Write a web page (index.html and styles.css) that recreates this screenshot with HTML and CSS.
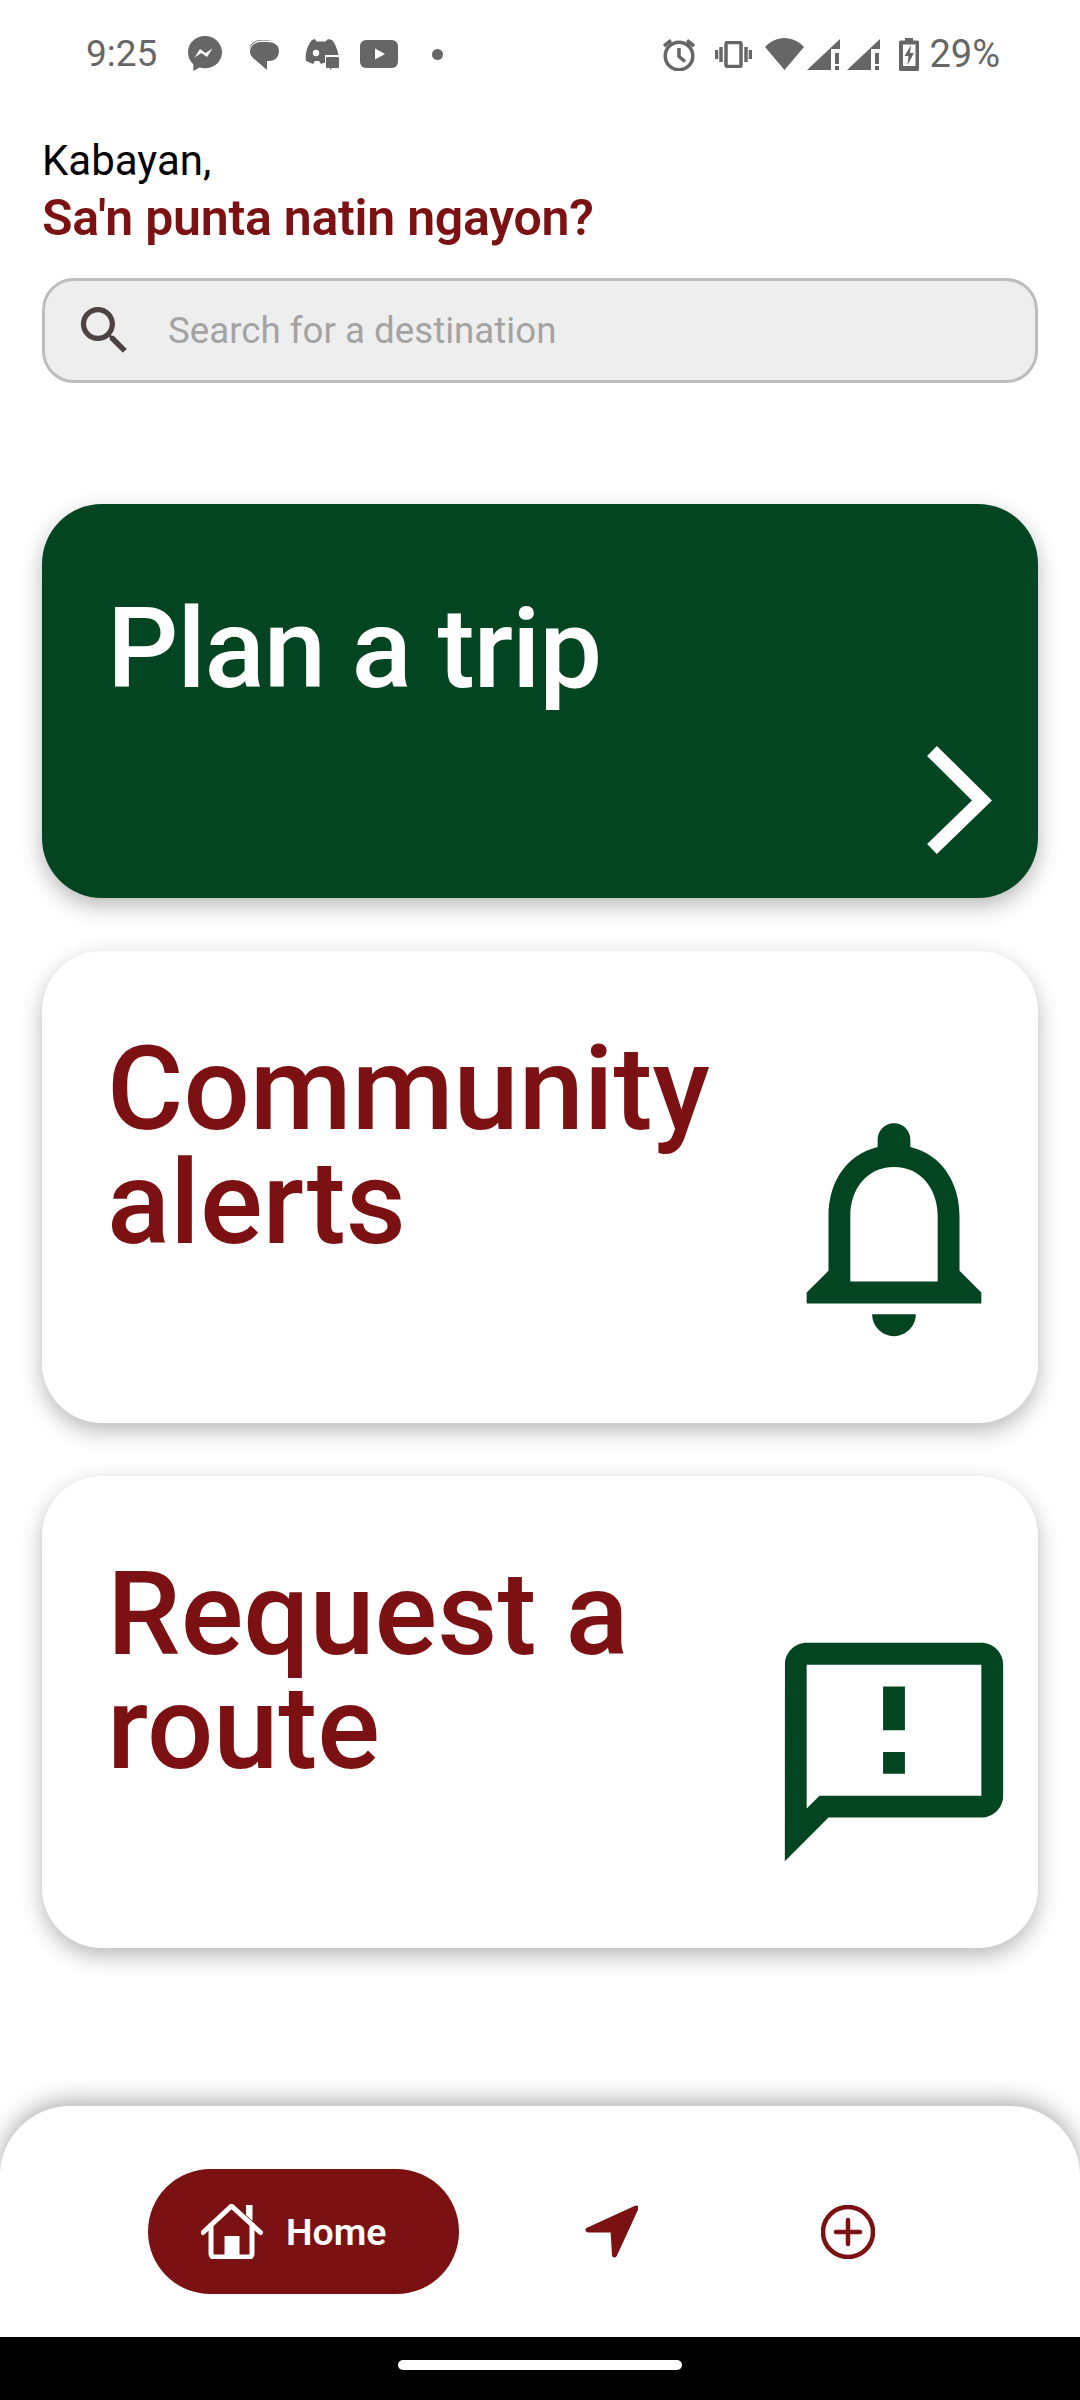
FILE: index.html
```html
<!DOCTYPE html>
<html lang="en">
<head>
<meta charset="utf-8">
<title>Kabayan</title>
<link rel="stylesheet" href="styles.css">
</head>
<body>
<div class="app">
  <header class="status">
    <div class="status-left">
      <span class="time">9:25</span>
      <svg class="si si-msg" viewBox="0 0 34 36"><path class="g" d="M17 0C7.5 0 0 7 0 16.3c0 4.9 2 9.1 5.3 12V35l6.2-3.4c1.7.5 3.6.7 5.5.7 9.5 0 17-7 17-16S26.500 0 17 0z"/><path class="w" d="M6.500 21.500l5.500-8.500 5.500 4 7-4.500-5.500 8.500-5.500-4z"/></svg>
      <svg class="si si-dis" viewBox="0 0 31 31"><path class="g" d="M1 11C2 5 6 1 13 1h6c3 0 4 .5 5 1-1.500-.5-3-.5-5-.5h-6C7 1.500 2.500 6 1 11z"/><path class="g" d="M13 3h6c7 0 12 3 12 9s-4 10-10 10h-2v9L5 19C3 17 2 15 2 13 2 7 7 3 13 3z"/></svg>
      <svg class="si si-dc" viewBox="0 0 34 31"><path class="g" d="M7 1l3-1 1.500 2.500h9L23 0l4 1c3 3 6 11 7 17H21v6h-3l-2 1-2-3h-4l-2 3-7-3C-.500 15 3 5 7 1z"/><circle class="w" cx="11" cy="14" r="3.200"/><path class="w" d="M20 16h14v15H20z"/><path class="g" d="M22 18h11a1 1 0 0 1 1 1v9a1 1 0 0 1-1 1h-6l-2 2v-2h-3a1 1 0 0 1-1-1v-9a1 1 0 0 1 1-1z"/></svg>
      <svg class="si si-yt" viewBox="0 0 38 28"><rect class="g" width="38" height="28" rx="6"/><path class="w" d="M15 8.500l10 5.500-10 5.500z"/></svg>
      <span class="dot"></span>
    </div>
    <div class="status-right">
      <svg class="si si-alarm" viewBox="0 0 32 33"><circle class="o" cx="16" cy="18" r="13.800"/><path class="o" d="M16 10v8.500l6 5M1 8l7-5.500M31 8l-7-5.500"/></svg>
      <svg class="si si-vib" viewBox="0 0 37 27"><rect class="o" x="11" y="1.500" width="15" height="24" rx="1.500"/><path class="o" d="M1.500 9v9M6 6v15M31 6v15M35.500 9v9"/></svg>
      <svg class="si si-wifi" viewBox="0 0 39 32"><path class="g" d="M19.500 32L0 9C5 3.500 12 0 19.500 0S34 3.500 39 9z"/></svg>
      <svg class="si si-sig" viewBox="0 0 33 31"><path class="g" d="M0 31L33 0v10h-9v21z"/><path class="g" d="M28 14h4v11h-4zM28 27h4v4h-4z"/></svg>
      <svg class="si si-sig" viewBox="0 0 33 31"><path class="g" d="M0 31L33 0v10h-9v21z"/><path class="g" d="M28 14h4v11h-4zM28 27h4v4h-4z"/></svg>
      <svg class="si si-bat" viewBox="0 0 20 33"><path class="g" d="M6 0h8v2.500h4.500a1.500 1.500 0 0 1 1.500 1.500v27.500a1.500 1.500 0 0 1-1.500 1.500h-17A1.500 1.500 0 0 1 0 31.500V4a1.500 1.500 0 0 1 1.500-1.500H6z"/><path class="w" d="M4 6.500h12.500v21.500H4z"/><path class="g" d="M12 7L5.500 18h4L8.500 27l6.500-12h-4z"/></svg>
      <span class="pct">29%</span>
    </div>
  </header>

  <main class="main">
    <p class="hello">Kabayan,</p>
    <h1 class="ask">Sa'n punta natin ngayon?</h1>
    <div class="search">
      <svg class="search-icon" viewBox="0 0 24 24"><path d="M15.500 14h-.79l-.28-.27C15.410 12.590 16 11.110 16 9.500 16 5.910 13.090 3 9.500 3S3 5.910 3 9.500 5.910 16 9.500 16c1.610 0 3.090-.59 4.230-1.570l.27.28v.79l5 4.990L20.490 19l-4.990-5zm-6 0C7.010 14 5 11.990 5 9.500S7.010 5 9.500 5 14 7.010 14 9.500 11.990 14 9.500 14z"/></svg>
      <span class="placeholder">Search for a destination</span>
    </div>

    <section class="card card-plan">
      <h2 class="card-title title-white">Plan a trip</h2>
      <svg class="chevron" viewBox="0 0 70 116"><path d="M7 9l50 49.500L7 107"/></svg>
    </section>

    <section class="card card-white">
      <h2 class="card-title">Community alerts</h2>
      <svg class="card-icon" viewBox="0 0 24 24"><path d="M12 22c1.100 0 2-.9 2-2h-4c0 1.100.9 2 2 2zm6-6v-5c0-3.070-1.630-5.640-4.500-6.320V4c0-.83-.67-1.500-1.500-1.500s-1.500.67-1.500 1.500v.68C7.640 5.360 6 7.920 6 11v5l-2 2v1h16v-1l-2-2zm-2 1H8v-6c0-2.480 1.510-4.500 4-4.500s4 2.020 4 4.500v6z"/></svg>
    </section>

    <section class="card card-white">
      <h2 class="card-title">Request a route</h2>
      <svg class="card-icon" viewBox="0 0 24 24"><path d="M20 2H4c-1.100 0-1.990.9-1.990 2L2 22l4-4h14c1.100 0 2-.9 2-2V4c0-1.100-.9-2-2-2zm0 14H5.170L4 17.170V4h16v12zm-9-4h2v2h-2zm0-6h2v4h-2z"/></svg>
    </section>
  </main>

  <nav class="nav">
    <div class="pill">
      <svg class="home-icon" viewBox="0 0 62 55"><path class="hs" d="M2 28.500L30.500 2 59.500 28.500"/><path class="hs" d="M10 21v29a3 3 0 0 0 3 3h35a3 3 0 0 0 3-3V21"/><path class="hf" d="M23.500 32h15v20h-15zM45 1h6.500v16L45 11z"/></svg>
      <span class="pill-label">Home</span>
    </div>
    <svg class="nav-arrow" viewBox="0 0 53 53"><path d="M51 3L3 25h25l1.500 25z"/></svg>
    <svg class="nav-plus" viewBox="0 0 54 54"><circle cx="27" cy="27" r="25"/><path d="M27 15v24M15 27h24"/></svg>
  </nav>

  <footer class="gesture"><span class="handle"></span></footer>
</div>
</body>
</html>
```
FILE: styles.css
```css
* { box-sizing: border-box; }
html, body { margin: 0; padding: 0; }
body { background: #fff; font-family: Roboto, "Liberation Sans", sans-serif; }
.app { width: 1080px; height: 2400px; display: flex; flex-direction: column; overflow: hidden; background: #fff; }

.status { height: 108px; flex: none; display: flex; justify-content: space-between; align-items: center; padding: 0 80px 0 86px; color: #666; }
.status-left, .status-right { display: flex; align-items: center; }
.time, .pct { font-size: 37px; line-height: 40px; color: #666; }
.pct { font-size: 38px; }
.si { display: block; flex: none; }
.g { fill: #666; }
.w { fill: #fff; }
.o { fill: none; stroke: #666; stroke-width: 3.500; }
.si-msg { width: 34px; height: 36px; margin-left: 31px; }
.si-dis { width: 31px; height: 31px; margin-left: 26px; }
.si-dc { width: 34px; height: 31px; margin-left: 26px; }
.si-yt { width: 38px; height: 28px; margin-left: 21px; }
.dot { width: 11px; height: 11px; border-radius: 50%; background: #666; margin-left: 34px; }
.si-alarm { width: 32px; height: 33px; margin-right: 20px; }
.si-vib { width: 37px; height: 27px; margin-right: 13px; }
.si-wifi { width: 39px; height: 32px; margin-right: 3px; }
.si-sig { width: 33px; height: 31px; margin-right: 7px; }
.si-bat { width: 20px; height: 33px; margin-left: 12px; margin-right: 10px; }

.main { flex: 1; padding: 30px 42px 0; }
.hello { margin: 0; font-size: 42px; line-height: 46px; color: #000; }
.ask { margin: 6px 0 0; font-size: 50px; line-height: 56px; font-weight: 600; letter-spacing: -.25px; color: #7b1113; }
.search { margin-top: 32px; height: 105px; display: flex; align-items: center; border: 3px solid #bdbdbd; border-radius: 32px; background: #eee; padding-left: 28px; }
.search-icon { width: 63px; height: 63px; fill: #4e4343; flex: none; }
.placeholder { margin-left: 32px; font-size: 36.700px; color: #a3a3a3; }

.card { border-radius: 60px; box-shadow: 0 8px 22px rgba(0, 0, 0, .28); display: flex; justify-content: space-between; align-items: flex-end; }
.card-plan { margin-top: 121px; height: 394px; background: #034521; padding: 0 43px 40px 65px; }
.card-white { margin-top: 53px; height: 472px; background: #fff; padding: 0 13px 65px 65px; }
.card-title { margin: 0; align-self: flex-start; padding-top: 81px; font-size: 117px; line-height: 114px; font-weight: 500; color: #7b1113; width: 640px; }
.title-white { color: #fff; font-size: 112px; letter-spacing: -1.200px; padding-top: 88px; }
.chevron { width: 70px; height: 116px; flex: none; }
.chevron path { fill: none; stroke: #fff; stroke-width: 14; }
.card-icon { width: 262px; height: 262px; fill: #034521; flex: none; }

.nav { flex: none; height: 231px; display: flex; align-items: center; padding: 20px 0 0 148px; background: #fff; border-radius: 70px 70px 0 0; box-shadow: 0 -6px 22px rgba(0, 0, 0, .3); position: relative; }
.pill { width: 311px; height: 125px; border-radius: 63px; background: #7b1113; display: flex; align-items: center; padding-left: 53px; }
.home-icon { width: 62px; height: 55px; flex: none; }
.hs { fill: none; stroke: #fff; stroke-width: 5; stroke-linecap: round; stroke-linejoin: round; }
.hf { fill: #fff; }
.pill-label { margin-left: 23px; font-size: 37.500px; font-weight: 600; color: #fff; }
.nav-arrow { width: 53px; height: 53px; margin-left: 126px; flex: none; }
.nav-arrow path { fill: #7b1113; stroke: #7b1113; stroke-width: 5; stroke-linejoin: round; }
.nav-plus { width: 54px; height: 54px; margin-left: 183px; flex: none; }
.nav-plus circle, .nav-plus path { fill: none; stroke: #7b1113; stroke-width: 4.500; stroke-linecap: round; }

.gesture { flex: none; height: 63px; background: #000; display: flex; justify-content: center; padding-top: 23px; position: relative; }
.handle { width: 284px; height: 10px; border-radius: 5px; background: #fff; }
```
